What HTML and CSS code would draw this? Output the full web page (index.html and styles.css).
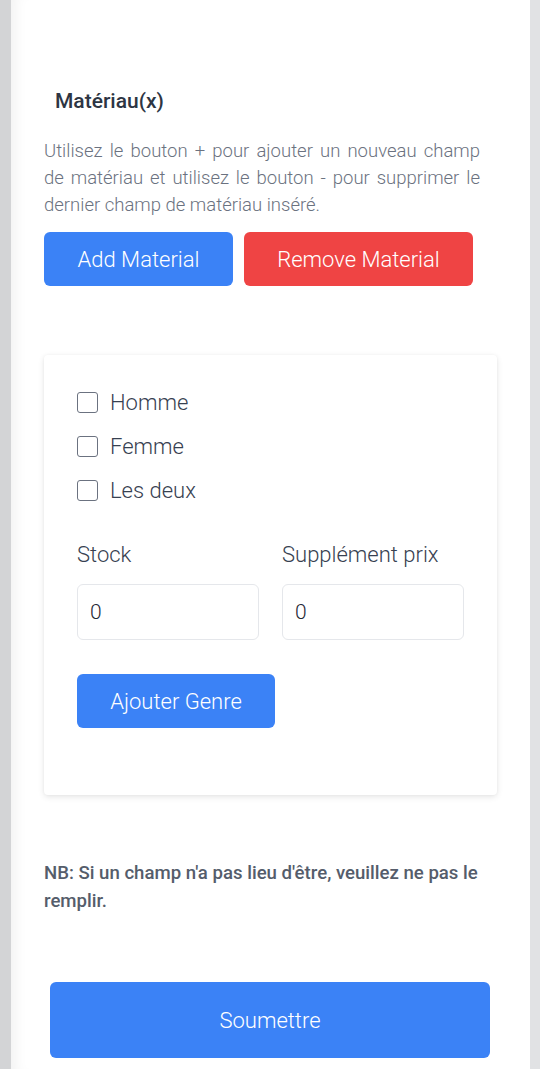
FILE: index.html
```html
<!DOCTYPE html>
<html lang="fr">
<head>
<meta charset="utf-8">
<link rel="stylesheet" href="styles.css">
</head>
<body>
<div class="page">
  <div class="edge edge-left"></div>
  <main class="panel">
    <h2 class="title">Matériau(x)</h2>
    <p class="help">Utilisez le bouton + pour ajouter un nouveau champ de matériau et utilisez le bouton - pour supprimer le dernier champ de matériau inséré.</p>
    <div class="actions">
      <button class="btn btn-blue btn-add">Add Material</button>
      <button class="btn btn-red btn-remove">Remove Material</button>
    </div>

    <section class="card">
      <div class="checks">
        <label class="check"><span class="box"></span>Homme</label>
        <label class="check"><span class="box"></span>Femme</label>
        <label class="check"><span class="box"></span>Les deux</label>
      </div>
      <div class="fields">
        <div class="field">
          <span class="field-label">Stock</span>
          <div class="input">0</div>
        </div>
        <div class="field">
          <span class="field-label">Supplément prix</span>
          <div class="input">0</div>
        </div>
      </div>
      <button class="btn btn-blue btn-genre">Ajouter Genre</button>
    </section>

    <p class="note">NB: Si un champ n'a pas lieu d'être, veuillez ne pas le remplir.</p>

    <button class="btn btn-blue btn-submit">Soumettre</button>
  </main>
  <div class="edge edge-right"></div>
</div>
</body>
</html>
```

FILE: styles.css
```css
* { box-sizing: border-box; }
html, body { margin: 0; padding: 0; }
body {
  font-family: Roboto, "Noto Sans", "Liberation Sans", sans-serif;
  background: #ffffff;
}
.page {
  display: flex;
  width: 540px;
  height: 1069px;
  overflow: hidden;
}
.edge { flex: none; }
.edge-left { width: 11px; background: #d3d4d6; }
.edge-right { width: 10px; background: #e1e2e4; }
.panel {
  flex: 1;
  background: #ffffff;
  padding: 89px 0 0 33px;
  box-shadow: inset 14px 0 14px -10px rgba(0,0,0,0.06);
  display: flex;
  flex-direction: column;
  align-items: flex-start;
}
.title {
  margin: 0 0 0 11px;
  font-size: 21px;
  line-height: 24px;
  font-weight: 500;
  color: #2d3543;
}
.help {
  margin: 25px 0 0 0;
  width: 436px;
  font-size: 18.5px;
  line-height: 27px;
  font-weight: 300;
  color: #6b7280;
  text-align: justify;
}
.actions {
  margin-top: 13px;
  display: flex;
  gap: 11px;
}
.btn {
  border: none;
  border-radius: 6px;
  font-family: inherit;
  font-size: 22px;
  font-weight: 300;
  color: #ffffff;
  height: 54px;
  padding: 0;
  display: flex;
  align-items: center;
  justify-content: center;
}
.btn-blue { background: #3b82f6; }
.btn-red { background: #ef4444; }
.btn-add { width: 189px; }
.btn-remove { width: 229px; }

.card {
  margin-top: 69px;
  width: 453px;
  background: #ffffff;
  border-radius: 4px;
  box-shadow: 0 2px 6px rgba(0,0,0,0.10), 0 0 3px rgba(0,0,0,0.04);
  padding: 35px 33px 67px 33px;
}
.checks {
  display: flex;
  flex-direction: column;
  gap: 20px;
}
.check {
  display: flex;
  align-items: center;
  gap: 12px;
  height: 24px;
  font-size: 22px;
  font-weight: 300;
  color: #374151;
}
.box {
  width: 21px;
  height: 21px;
  border: 1.5px solid #6b7280;
  border-radius: 3px;
  background: #fff;
  flex: none;
}
.fields {
  margin-top: 41px;
  display: grid;
  grid-template-columns: 1fr 1fr;
  gap: 23px;
}
.field {
  display: flex;
  flex-direction: column;
  gap: 17px;
}
.field-label {
  font-size: 22px;
  line-height: 24px;
  font-weight: 300;
  color: #374151;
}
.input {
  height: 56px;
  border: 1px solid #e5e7eb;
  border-radius: 6px;
  padding-left: 12px;
  display: flex;
  align-items: center;
  font-size: 21px;
  font-weight: 300;
  color: #1f2937;
}
.btn-genre {
  margin-top: 34px;
  width: 198px;
}
.note {
  margin: 64px 0 0 0;
  width: 453px;
  font-size: 18.6px;
  line-height: 28px;
  font-weight: 500;
  color: #555d6b;
}
.btn-submit {
  margin: 67px 0 0 6px;
  width: 440px;
  height: 76px;
}
```
